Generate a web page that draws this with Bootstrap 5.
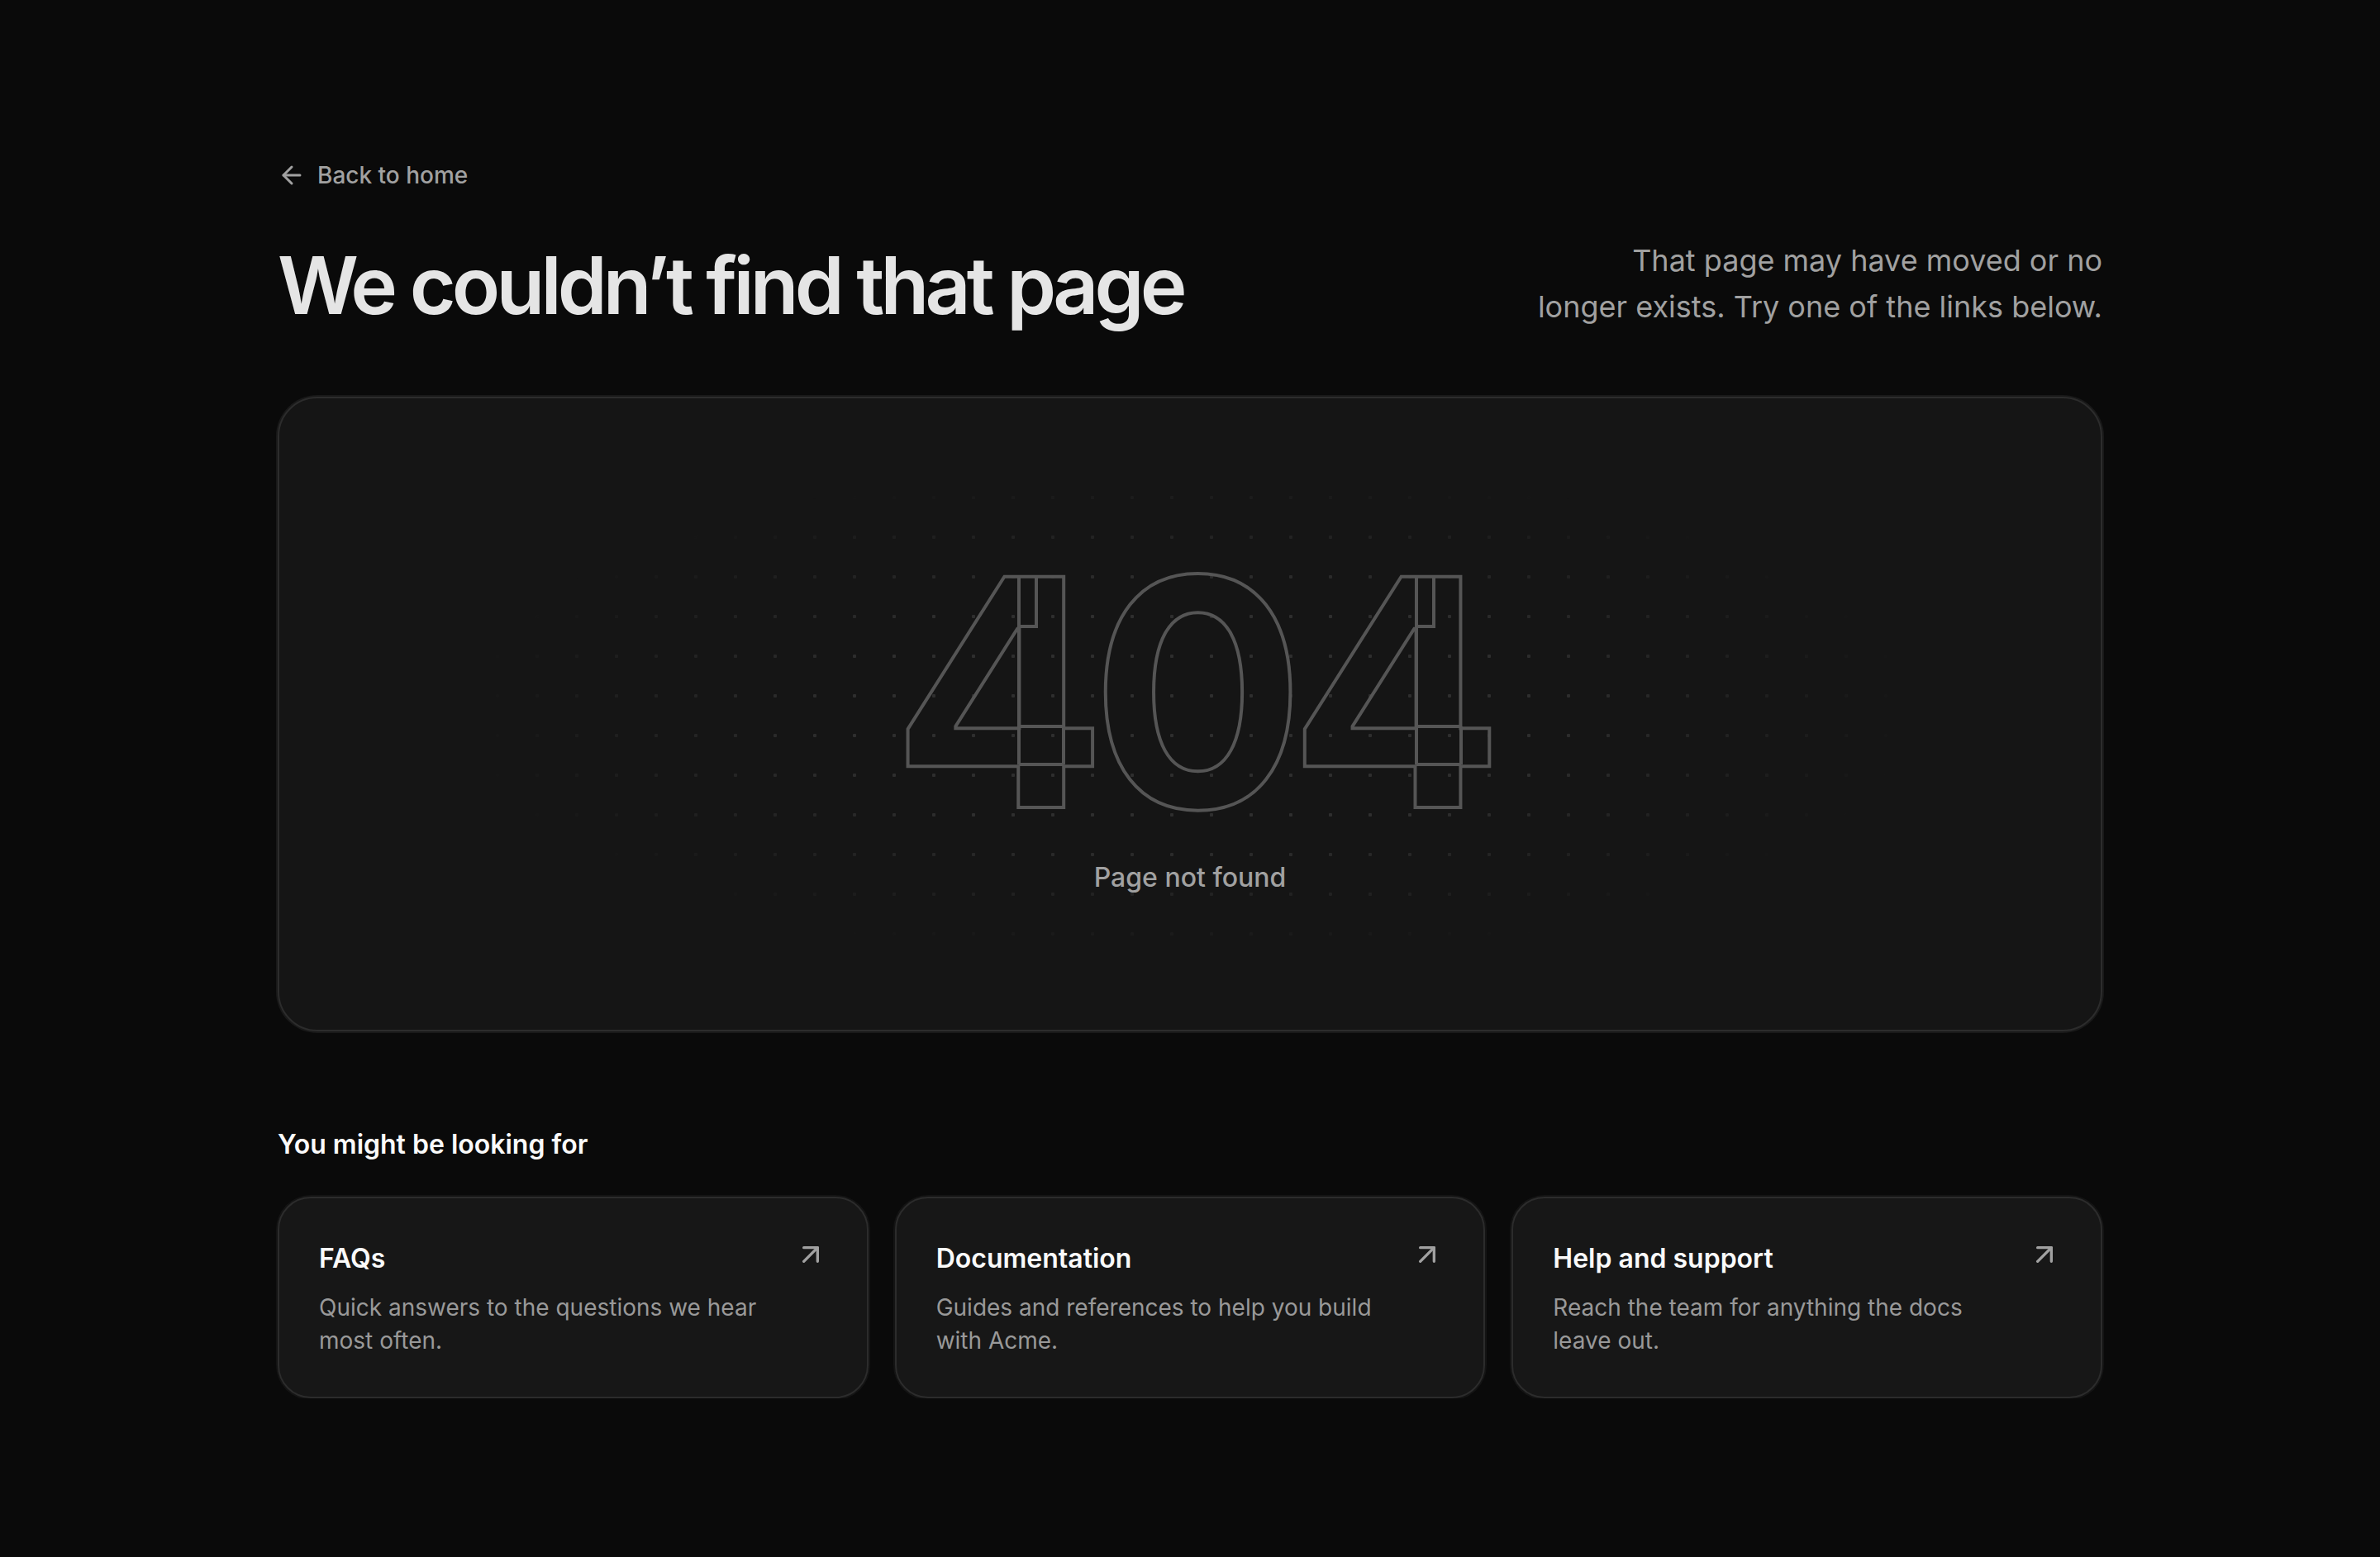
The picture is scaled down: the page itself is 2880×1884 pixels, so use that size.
<!DOCTYPE html>
<html lang="en">

<head>
    <meta charset="UTF-8">
    <meta name="viewport" content="width=device-width, initial-scale=1.0">
    <title>Page not found</title>
    <link href="https://cdn.jsdelivr.net/npm/bootstrap@5.3.0/dist/css/bootstrap.min.css" rel="stylesheet">
    <style>
        body {
            background-color: #0a0a0a;
            font-family: "Inter", "Liberation Sans", sans-serif;
            color: #fafafa;
        }

        .page-wrap {
            width: 2208px;
            margin: 0 auto;
            padding-top: 192px;
        }

        .back-link {
            color: #a1a1a1;
            font-size: 28px;
            font-weight: 500;
            line-height: 40px;
            text-decoration: none;
        }

        .page-head {
            margin: 53px 0 81px;
        }

        .page-title {
            color: #e5e5e5;
            font-size: 96px;
            font-weight: 600;
            line-height: 108px;
            letter-spacing: -4.8px;
            margin: 0;
        }

        .page-intro {
            color: #a1a1a1;
            font-size: 36px;
            line-height: 56px;
            margin: 0;
        }

        .hero-panel {
            position: relative;
            height: 768px;
            padding-top: 4px;
            background-color: #151515;
            border: 2px solid #2c2c2c;
            border-radius: 48px;
            box-shadow: 0 0 0 2px #191919;
            overflow: hidden;
        }

        /* dot grid, faded out from the middle */
        .hero-dots {
            position: absolute;
            inset: 0;
            background-image: radial-gradient(circle, #2e2e2e 2px, transparent 2.5px);
            background-size: 48px 48px;
            -webkit-mask-image: radial-gradient(ellipse closest-side at center, #000 40%, transparent 80%);
            mask-image: radial-gradient(ellipse closest-side at center, #000 40%, transparent 80%);
        }

        .hero-number {
            position: relative;
            color: transparent;
            -webkit-text-stroke: 4px #555;
            font-size: 384px;
            font-weight: 700;
            line-height: 384px;
            letter-spacing: -19.2px;
        }

        /* inner contour lines of the two fours, sit on top of the text */
        .hero-lines {
            position: absolute;
            inset: 0;
            width: 100%;
            height: 100%;
            stroke: #555;
            stroke-width: 4;
            fill: none;
        }

        .hero-caption {
            position: relative;
            color: #a1a1a1;
            font-size: 32px;
            line-height: 48px;
            font-weight: 500;
        }

        .links-title {
            font-size: 32px;
            font-weight: 600;
            line-height: 48px;
            margin: 113px 0 39px;
        }

        .link-grid {
            display: grid;
            grid-template-columns: repeat(3, 1fr);
            gap: 32px;
        }

        .link-tile {
            background-color: #171717;
            border: 2px solid #2c2c2c;
            border-radius: 40px;
            box-shadow: 0 0 0 2px #141414;
            padding: 48px;
            color: #fafafa;
            text-decoration: none;
        }

        .tile-title {
            font-size: 32px;
            font-weight: 600;
            line-height: 50px;
            margin-bottom: 14px;
        }

        .tile-text {
            color: #999;
            font-size: 28px;
            line-height: 40px;
            margin: 0;
            max-width: 560px;
        }

        .tile-icon {
            color: #a1a1a1;
        }
    </style>
</head>

<body>
    <div class="page-wrap">
        <a href="#" class="back-link d-inline-flex align-items-center gap-3">
            <svg width="32" height="32" viewBox="0 0 32 32" fill="none" stroke="currentColor" stroke-width="3" stroke-linecap="round" stroke-linejoin="round"><path d="M27 16H7"/><path d="M17 26 7 16 17 6"/></svg>
            Back to home
        </a>

        <div class="page-head d-flex justify-content-between align-items-end">
            <h1 class="page-title">We couldn’t find that page</h1>
            <p class="page-intro text-end">That page may have moved or no<br>longer exists. Try one of the links below.</p>
        </div>

        <div class="hero-panel d-flex flex-column align-items-center justify-content-center">
            <div class="hero-dots"></div>
            <div class="hero-number">404</div>
            <div class="hero-caption mt-2">Page not found</div>
            <svg class="hero-lines" viewBox="0 0 2204 764" preserveAspectRatio="none">
                <path d="M895 214V397M916 214V276H895M895 397V443M949 397V443M895 397H949M895 443H949"/>
                <path d="M1376 214V397M1397 214V276H1376M1376 397V443M1430 397V443M1376 397H1430M1376 443H1430"/>
            </svg>
        </div>

        <h2 class="links-title">You might be looking for</h2>

        <div class="link-grid">
            <a href="#" class="link-tile d-flex justify-content-between">
                <div>
                    <div class="tile-title">FAQs</div>
                    <p class="tile-text">Quick answers to the questions we hear most often.</p>
                </div>
                <svg class="tile-icon flex-shrink-0" width="40" height="40" viewBox="0 0 24 24" fill="none" stroke="currentColor" stroke-width="2" stroke-linecap="round" stroke-linejoin="round"><path d="M7 7h10v10"/><path d="M7 17 17 7"/></svg>
            </a>
            <a href="#" class="link-tile d-flex justify-content-between">
                <div>
                    <div class="tile-title">Documentation</div>
                    <p class="tile-text">Guides and references to help you build with Acme.</p>
                </div>
                <svg class="tile-icon flex-shrink-0" width="40" height="40" viewBox="0 0 24 24" fill="none" stroke="currentColor" stroke-width="2" stroke-linecap="round" stroke-linejoin="round"><path d="M7 7h10v10"/><path d="M7 17 17 7"/></svg>
            </a>
            <a href="#" class="link-tile d-flex justify-content-between">
                <div>
                    <div class="tile-title">Help and support</div>
                    <p class="tile-text">Reach the team for anything the docs leave out.</p>
                </div>
                <svg class="tile-icon flex-shrink-0" width="40" height="40" viewBox="0 0 24 24" fill="none" stroke="currentColor" stroke-width="2" stroke-linecap="round" stroke-linejoin="round"><path d="M7 7h10v10"/><path d="M7 17 17 7"/></svg>
            </a>
        </div>
    </div>

    <script src="https://cdn.jsdelivr.net/npm/bootstrap@5.3.0/dist/js/bootstrap.bundle.min.js"></script>
</body>

</html>
